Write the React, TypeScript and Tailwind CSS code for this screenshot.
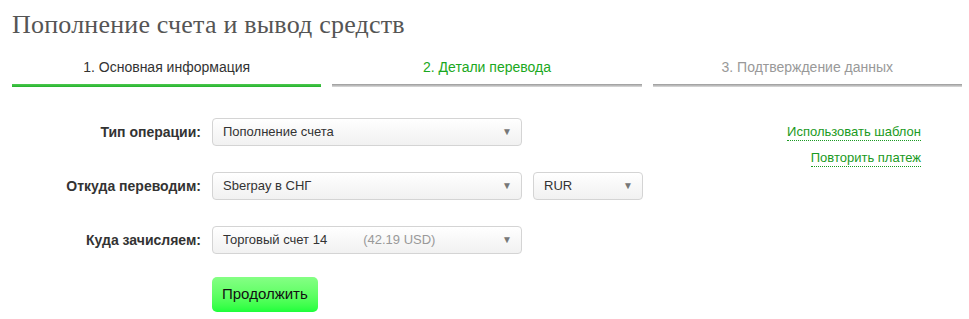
const SANS = "font-['Liberation_Sans',Arial,sans-serif]";

function Arrow() {
  return <span className="text-[10px] leading-none text-[#777]">▼</span>;
}

function Select({
  children,
  className = "",
}: {
  children: React.ReactNode;
  className?: string;
}) {
  return (
    <div
      className={`flex h-[28px] items-center justify-between rounded-[4px] border border-[#d4d4d4] bg-gradient-to-b from-white to-[#f1f1f1] pl-[10px] pr-[9px] text-[13px] text-[#333] ${className}`}
    >
      <span className="whitespace-nowrap">{children}</span>
      <Arrow />
    </div>
  );
}

function Row({ label, children }: { label: string; children: React.ReactNode }) {
  return (
    <div className="flex items-center">
      <div className="w-[189px] text-right text-[14px] font-bold text-[#333]">
        {label}
      </div>
      <div className="ml-[11px] flex gap-[11px]">{children}</div>
    </div>
  );
}

export default function App() {
  return (
    <div className={`h-[319px] w-[969px] bg-white px-3 ${SANS}`}>
      <h1 className="pt-[10px] font-['Liberation_Serif','Times_New_Roman',serif] text-[26px] tracking-[0.2px] leading-[30px] text-[#555]">
        Пополнение счета и вывод средств
      </h1>

      <div className="mt-[17px] grid w-[950px] grid-cols-3 gap-[11px] text-center text-[14px]">
        <div>
          <div className="pb-[6px] text-[#333]">1. Основная информация</div>
          <div className="h-[3px] bg-gradient-to-b from-[#4cc94f] to-[#22b22c]" />
        </div>
        <div>
          <div className="pb-[6px] text-[#1aa821]">2. Детали перевода</div>
          <div className="h-[3px] bg-gradient-to-b from-[#999] to-[#ddd]" />
        </div>
        <div>
          <div className="pb-[6px] text-[#999]">3. Подтверждение данных</div>
          <div className="h-[3px] bg-gradient-to-b from-[#999] to-[#ddd]" />
        </div>
      </div>

      <div className="mt-[31px] flex w-[950px]">
        <div className="flex flex-1 flex-col gap-[26px]">
          <Row label="Тип операции:">
            <Select className="w-[310px]">Пополнение счета</Select>
          </Row>
          <Row label="Откуда переводим:">
            <Select className="w-[310px]">Sberpay в СНГ</Select>
            <Select className="w-[110px]">RUR</Select>
          </Row>
          <Row label="Куда зачисляем:">
            <Select className="w-[310px]">
              Торговый счет 14
              <span className="inline-block w-[36px]" />
              <span className="text-[#999]">(42.19 USD)</span>
            </Select>
          </Row>
          <div className="ml-[200px]">
            <button
              type="button"
              className="-mt-[3px] h-[35px] rounded-[5px] bg-gradient-to-b from-[#84ff84] to-[#19ff3a] px-[10px] text-[15px] text-[#111]"
            >
              Продолжить
            </button>
          </div>
        </div>
        <div className="flex flex-col items-end gap-[9px] pr-[41px] pt-[6px] text-[13px] text-[#1a9a22]">
          <span className="border-b border-dotted border-[#1a9a22] leading-[16px]">
            Использовать шаблон
          </span>
          <span className="border-b border-dotted border-[#1a9a22] leading-[16px]">
            Повторить платеж
          </span>
        </div>
      </div>
    </div>
  );
}
